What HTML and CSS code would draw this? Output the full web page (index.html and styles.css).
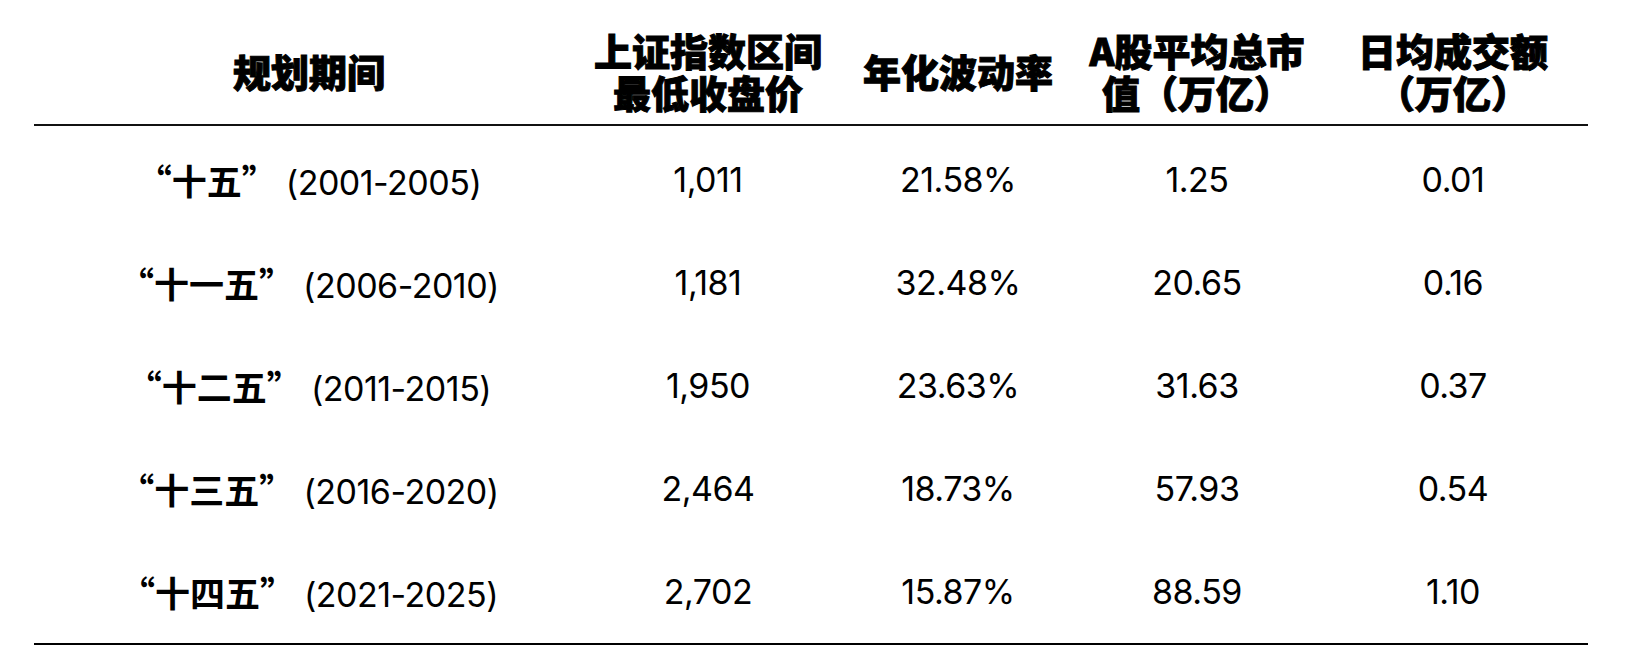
FILE: index.html
```html
<!DOCTYPE html>
<html lang="zh-CN">
<head>
<meta charset="utf-8">
<link rel="stylesheet" href="styles.css">
</head>
<body>
<div class="table">
  <div class="row head">
    <div class="cell c1">规划期间</div>
    <div class="cell c2">上证指数区间<br>最低收盘价</div>
    <div class="cell c3">年化波动率</div>
    <div class="cell c4">A股平均总市<br>值（万亿）</div>
    <div class="cell c5">日均成交额<br>（万亿）</div>
  </div>
  <div class="body">
    <div class="row">
      <div class="cell c1"><span class="plan">“十五”</span> <span>(2001-2005)</span></div>
      <div class="cell c2">1,011</div>
      <div class="cell c3">21.58%</div>
      <div class="cell c4">1.25</div>
      <div class="cell c5">0.01</div>
    </div>
    <div class="row">
      <div class="cell c1"><span class="plan">“十一五”</span> <span>(2006-2010)</span></div>
      <div class="cell c2">1,181</div>
      <div class="cell c3">32.48%</div>
      <div class="cell c4">20.65</div>
      <div class="cell c5">0.16</div>
    </div>
    <div class="row">
      <div class="cell c1"><span class="plan">“十二五”</span> <span>(2011-2015)</span></div>
      <div class="cell c2">1,950</div>
      <div class="cell c3">23.63%</div>
      <div class="cell c4">31.63</div>
      <div class="cell c5">0.37</div>
    </div>
    <div class="row">
      <div class="cell c1"><span class="plan">“十三五”</span> <span>(2016-2020)</span></div>
      <div class="cell c2">2,464</div>
      <div class="cell c3">18.73%</div>
      <div class="cell c4">57.93</div>
      <div class="cell c5">0.54</div>
    </div>
    <div class="row">
      <div class="cell c1"><span class="plan">“十四五”</span> <span>(2021-2025)</span></div>
      <div class="cell c2">2,702</div>
      <div class="cell c3">15.87%</div>
      <div class="cell c4">88.59</div>
      <div class="cell c5">1.10</div>
    </div>
  </div>
</div>
</body>
</html>
```

FILE: styles.css
```css
html, body {
  margin: 0;
  padding: 0;
  background: #ffffff;
}

.table {
  width: 1554px;
  margin-left: 34px;
  color: #000;
}

.row {
  display: grid;
  grid-template-columns: 550px 248px 252px 226px 278px;
  align-items: center;
}

.cell {
  text-align: center;
}

.cell.c5 {
  padding-left: 8px;
}

.head {
  height: 126px;
  padding-top: 18px;
  box-sizing: border-box;
  border-bottom: 2px solid #111;
  font-family: "Noto Sans CJK SC", sans-serif;
  font-weight: 900;
  font-size: 38px;
  line-height: 42px;
  -webkit-text-stroke: 1px #000;
}

.body {
  padding-top: 2px;
  border-bottom: 2px solid #000;
}

.body .row {
  height: 103px;
  font-family: Inter, "Noto Sans CJK SC", sans-serif;
  font-size: 34px;
  font-weight: 400;
  letter-spacing: -0.5px;
}

.plan {
  font-family: "Noto Sans CJK SC", sans-serif;
  font-weight: 700;
  font-size: 35px;
  letter-spacing: 0;
}
```
